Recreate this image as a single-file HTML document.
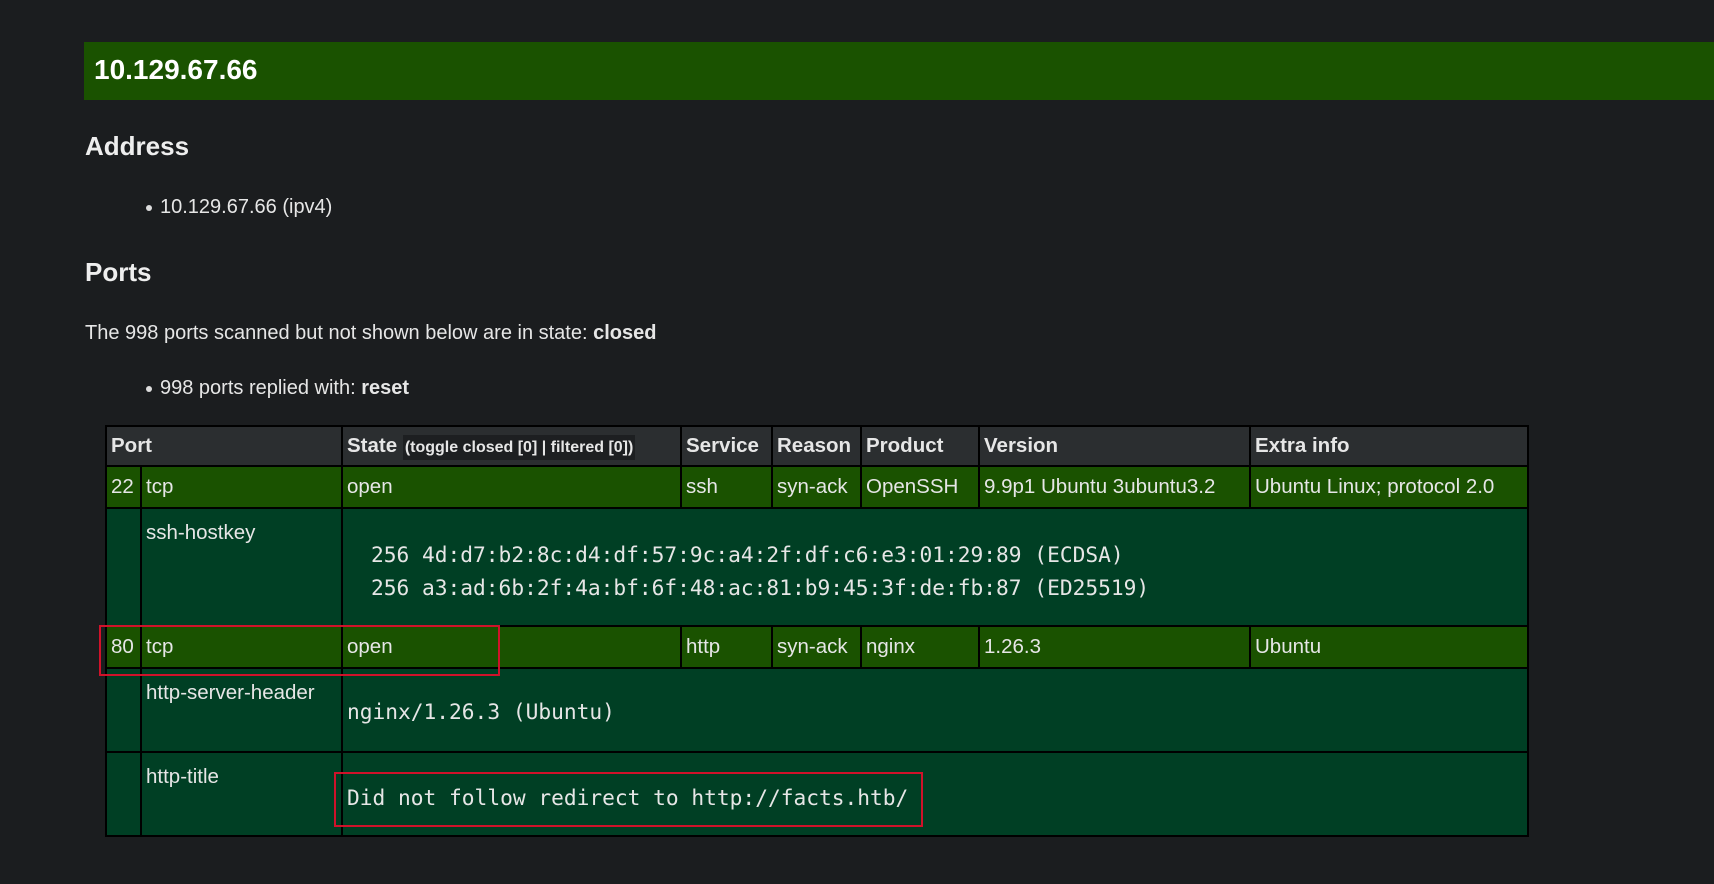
<!DOCTYPE html>
<html><head><meta charset="utf-8"><style>
body{margin:0;width:1714px;height:884px;background:#1b1d1f;color:#e6e6e6;font-family:"Liberation Sans",sans-serif;position:relative;overflow:hidden}
.a{position:absolute;white-space:nowrap}
.bar{left:84px;top:42px;width:1630px;height:58px;background:#1a5200}
h1{position:absolute;left:94px;top:54px;margin:0;font-size:28px;color:#fff}
h2{position:absolute;margin:0;font-size:26px;color:#eee;left:85px}
.t{font-size:20px}
.dot{display:inline-block;width:6px;height:6px;border-radius:50%;background:#ddd;margin-right:8px;vertical-align:middle}
table{position:absolute;left:105px;top:425px;border-collapse:collapse;border:2px solid #000;font-size:20.5px;table-layout:fixed}
td{border:2px solid #000;padding:0 4px;vertical-align:middle;color:#e6e6e6;white-space:nowrap;overflow:hidden}
.h td{background:#2b2e30;font-weight:bold;height:38px}
.g td{background:#1a5200;height:40px}
.s td{background:#003f24;vertical-align:top;padding-top:12px}
.m{font-family:"DejaVu Sans Mono",monospace;font-size:21.2px}
.red{position:absolute;border:2px solid #d0122a}
</style></head><body>
<div class="a bar"></div>
<h1>10.129.67.66</h1>
<h2 style="top:131px">Address</h2>
<div class="a t" style="left:146px;top:196px"><span class="dot"></span>10.129.67.66 (ipv4)</div>
<h2 style="top:257px">Ports</h2>
<div class="a t" style="left:85px;top:322px">The 998 ports scanned but not shown below are in state: <b>closed</b></div>
<div class="a t" style="left:146px;top:377px"><span class="dot"></span>998 ports replied with: <b>reset</b></div>
<table>
<colgroup><col style="width:35px"><col style="width:201px"><col style="width:339px"><col style="width:91px"><col style="width:89px"><col style="width:118px"><col style="width:271px"><col style="width:278px"></colgroup>
<tr class="h"><td colspan="2">Port</td><td>State <span style="font-size:16px;background:#1d1f21;padding:4px 2px">(toggle closed [0] | filtered [0])</span></td><td>Service</td><td>Reason</td><td>Product</td><td>Version</td><td>Extra info</td></tr>
<tr class="g"><td>22</td><td>tcp</td><td>open</td><td>ssh</td><td>syn-ack</td><td>OpenSSH</td><td>9.9p1 Ubuntu 3ubuntu3.2</td><td>Ubuntu Linux; protocol 2.0</td></tr>
<tr class="s" style="height:118px"><td></td><td>ssh-hostkey</td><td colspan="6" class="m" style="padding-top:29px;line-height:33px;padding-left:28px">256 4d:d7:b2:8c:d4:df:57:9c:a4:2f:df:c6:e3:01:29:89 (ECDSA)<br>256 a3:ad:6b:2f:4a:bf:6f:48:ac:81:b9:45:3f:de:fb:87 (ED25519)</td></tr>
<tr class="g"><td>80</td><td>tcp</td><td>open</td><td>http</td><td>syn-ack</td><td>nginx</td><td>1.26.3</td><td>Ubuntu</td></tr>
<tr class="s" style="height:84px"><td></td><td>http-server-header</td><td colspan="6" class="m" style="padding-top:30px">nginx/1.26.3 (Ubuntu)</td></tr>
<tr class="s" style="height:84px"><td></td><td>http-title</td><td colspan="6" class="m" style="padding-top:32px">Did not follow redirect to http://facts.htb/</td></tr>
</table>
<div class="red" style="left:99px;top:625px;width:397px;height:47px"></div>
<div class="red" style="left:334px;top:772px;width:585px;height:51px"></div>
</body></html>
